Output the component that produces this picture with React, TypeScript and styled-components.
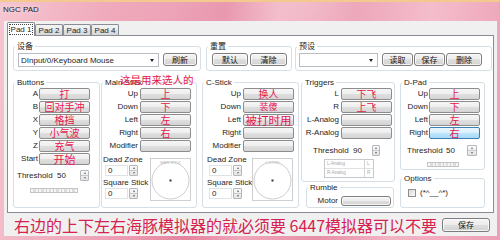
import React from "react";
import styled, { createGlobalStyle } from "styled-components";

const CJK = `"Noto Sans CJK SC", "Liberation Sans", sans-serif`;

const GlobalStyle = createGlobalStyle`
  html, body { margin: 0; padding: 0; background: #eea6b8; }
  body {
    width: 500px; height: 240px; overflow: hidden;
    font-family: "Liberation Sans", "Noto Sans CJK SC", sans-serif;
  }
  *, *::before, *::after { box-sizing: border-box; }
`;

const Window = styled.div`
  width: 500px;
  height: 240px;
  display: flex;
  flex-direction: column;
  padding: 0 2px 4px 4px;
  border-top: 2px solid #f3c98f;
  border-right: 1px solid #eab27a;
  background:
    radial-gradient(ellipse at 62% 0%, rgba(255, 255, 255, 0.3), transparent 45%),
    linear-gradient(100deg, #f6c6d1 0%, #f0adbe 18%, #ec9bb1 32%, #e4839e 42%, #f0a8ba 52%, #e88ea7 66%, #f3b5c5 80%, #eda0b5 100%);
`;

const TitleBar = styled.div`
  height: 19px;
  flex: none;
  margin-left: -1px;
  padding-top: 3px;
  font-size: 8px;
  line-height: 9px;
  color: #222;
  text-shadow: 0 0 4px rgba(255, 255, 255, 0.9);
`;

const Client = styled.div`
  flex: 1;
  min-height: 0;
  display: flex;
  flex-direction: column;
  padding: 1px 3px 0 3px;
  background: #f0f0f0;
`;

const TabStrip = styled.div`
  height: 13px;
  flex: none;
  display: flex;
  align-items: flex-end;
`;

const Tab = styled.div<{ $active?: boolean }>`
  width: 28px;
  height: ${(p) => (p.$active ? 14 : 11)}px;
  margin-bottom: ${(p) => (p.$active ? -1 : 0)}px;
  position: relative;
  z-index: ${(p) => (p.$active ? 2 : 1)};
  border: 1px solid #898c95;
  border-bottom: none;
  border-radius: 2px 2px 0 0;
  background: ${(p) =>
    p.$active ? "#ffffff" : "linear-gradient(#f3f3f3 0%, #ebebeb 50%, #e0e0e0 50%, #d8d8d8 100%)"};
  display: flex;
  align-items: ${(p) => (p.$active ? "flex-start" : "center")};
  justify-content: center;
  padding-top: ${(p) => (p.$active ? 2 : 0)}px;
  font-size: 8px;
  line-height: 9px;
  color: #1e1e1e;
`;

const TabFocus = styled.span`
  outline: 1px dotted #444;
  outline-offset: 0;
  padding: 0 1px;
`;

const Panel = styled.div`
  height: 178px;
  flex: none;
  position: relative;
  z-index: 1;
  border: 1px solid #898c95;
  background: #fff;
  padding: 6px 4px 0 5px;
  display: flex;
  flex-direction: column;
`;

const Row = styled.div<{ $mt?: number }>`
  display: flex;
  align-items: flex-start;
  flex: none;
  margin-top: ${(p) => p.$mt ?? 0}px;
`;

const Stack = styled.div<{ $ml?: number }>`
  display: flex;
  flex-direction: column;
  flex: none;
  margin-left: ${(p) => p.$ml ?? 0}px;
`;

const Group = styled.fieldset<{ $w: number; $h: number; $ml?: number; $mt?: number }>`
  margin: ${(p) => p.$mt ?? 0}px 0 0 ${(p) => p.$ml ?? 0}px;
  padding: 0;
  min-width: 0;
  width: ${(p) => p.$w}px;
  height: ${(p) => p.$h}px;
  flex: none;
  border: 1px solid #d5dfe5;
  border-radius: 3px;
`;

const Legend = styled.legend`
  margin-left: 1px;
  padding: 0 2px;
  font-size: 8px;
  line-height: 9px;
  height: 9px;
  color: #1e1e1e;
  white-space: nowrap;
`;

const Body = styled.div<{ $pad: string; $row?: boolean; $gap?: number }>`
  position: relative;
  padding: ${(p) => p.$pad};
  display: flex;
  flex-direction: ${(p) => (p.$row ? "row" : "column")};
  align-items: flex-start;
  gap: ${(p) => p.$gap ?? 0}px;
`;

const Combo = styled.div<{ $w: number }>`
  width: ${(p) => p.$w}px;
  height: 14px;
  flex: none;
  border: 1px solid #b9bdc3;
  background: #fff;
  display: flex;
  align-items: center;
  padding-left: 2px;
  font-size: 8px;
  color: #1e1e1e;
`;

const ComboText = styled.span`
  flex: 1;
  white-space: nowrap;
  overflow: hidden;
`;

const ComboArrow = styled.span`
  width: 0;
  height: 0;
  margin-right: 4px;
  border-left: 2.5px solid transparent;
  border-right: 2.5px solid transparent;
  border-top: 3px solid #222;
`;

const PushButton = styled.div<{ $w: number; $h?: number; $ml?: number }>`
  width: ${(p) => p.$w}px;
  height: ${(p) => p.$h ?? 13}px;
  margin-left: ${(p) => p.$ml ?? 0}px;
  flex: none;
  border: 1px solid #7d7d7d;
  border-radius: 3px;
  background: linear-gradient(#f4f4f4 0%, #ececec 50%, #dedede 50%, #d2d2d2 100%);
  box-shadow: inset 0 0 0 1px rgba(255, 255, 255, 0.75);
  display: flex;
  align-items: center;
  justify-content: center;
  font-family: ${CJK};
  font-size: 8px;
  color: #111;
`;

const MapGrid = styled.div<{ $lw: number; $gap: number }>`
  display: grid;
  grid-template-columns: ${(p) => p.$lw}px 51px;
  column-gap: ${(p) => p.$gap}px;
  row-gap: 1px;
  grid-auto-rows: 12px;
  align-items: center;
`;

const MapLabel = styled.span`
  text-align: right;
  font-size: 8px;
  line-height: 12px;
  color: #1e1e1e;
  white-space: nowrap;
`;

const MapButton = styled.div<{ $hot?: boolean; $size?: number }>`
  height: 12px;
  border: 1px solid ${(p) => (p.$hot ? "#3c7fb1" : "#8d8d8d")};
  border-radius: 2px;
  background: ${(p) =>
    p.$hot
      ? "linear-gradient(#eaf6fd 0%, #d9f0fc 50%, #bee6fd 50%, #a7d9f5 100%)"
      : "linear-gradient(#f6f6f6 0%, #eeeeee 50%, #e0e0e0 50%, #d4d4d4 100%)"};
  display: flex;
  align-items: center;
  justify-content: center;
  font-family: ${CJK};
  font-size: ${(p) => p.$size ?? 10}px;
  line-height: 10px;
  color: #e5164c;
  white-space: nowrap;
`;

const Scribble = styled.span`
  position: absolute;
  left: 18px;
  top: -13px;
  font-family: ${CJK};
  font-size: 10.5px;
  line-height: 12px;
  color: #e5164c;
  white-space: nowrap;
  pointer-events: none;
`;

const FieldRow = styled.div<{ $pl: number; $mt: number }>`
  display: flex;
  align-items: center;
  height: 11px;
  margin-top: ${(p) => p.$mt}px;
  padding-left: ${(p) => p.$pl}px;
`;

const FieldLabel = styled.span<{ $w?: number }>`
  ${(p) => (p.$w ? `width: ${p.$w}px;` : "")}
  flex: none;
  font-size: 8px;
  line-height: 10px;
  color: #1e1e1e;
  white-space: nowrap;
`;

const ValueBox = styled.div<{ $w: number; $plain?: boolean }>`
  width: ${(p) => p.$w}px;
  height: 11px;
  flex: none;
  padding-left: 2px;
  font-size: 8px;
  line-height: 9px;
  color: #1e1e1e;
  border: 1px solid ${(p) => (p.$plain ? "transparent" : "#dfe3e8")};
  background: #fff;
`;

const Spinner = styled.div<{ $w?: number; $ml?: number }>`
  width: ${(p) => p.$w ?? 9}px;
  height: 11px;
  margin-left: ${(p) => p.$ml ?? 2}px;
  flex: none;
  display: flex;
  flex-direction: column;
  border: 1px solid #b4b8bd;
  border-radius: 1px;
  background: linear-gradient(#fafafa, #e4e4e4);
`;

const SpinHalf = styled.span<{ $down?: boolean }>`
  flex: 1;
  display: flex;
  align-items: center;
  justify-content: center;
  border-top: ${(p) => (p.$down ? "1px solid #c6c9cc" : "none")};
  &::after {
    content: "";
    width: 0;
    height: 0;
    border-left: 1.5px solid transparent;
    border-right: 1.5px solid transparent;
    ${(p) => (p.$down ? "border-top: 2px solid #6a6a6a;" : "border-bottom: 2px solid #6a6a6a;")}
  }
`;

const SegBar = styled.div<{ $w: number; $ml: number; $mt: number }>`
  display: flex;
  width: ${(p) => p.$w}px;
  height: 5px;
  margin: ${(p) => p.$mt}px 0 0 ${(p) => p.$ml}px;
  border: 1px solid #c4c4c4;
  background: #f6f6f6;
`;

const Seg = styled.span`
  flex: 1;
  border-right: 1px solid #cdcdcd;
  background: linear-gradient(90deg, transparent 30%, #dcdcdc 30%, #dcdcdc 70%, transparent 70%);
  &:last-child {
    border-right: none;
  }
`;

const StickArea = styled.div<{ $pl: number }>`
  display: flex;
  margin-top: 3px;
  padding-left: ${(p) => p.$pl}px;
`;

const StickCol = styled.div<{ $w: number }>`
  width: ${(p) => p.$w}px;
  flex: none;
  display: flex;
  flex-direction: column;
`;

const InputRow = styled.div<{ $mb?: number }>`
  display: flex;
  align-items: center;
  height: 11px;
  padding-left: 2px;
  margin-bottom: ${(p) => p.$mb ?? 0}px;
`;

const StickBox = styled.div`
  width: 41px;
  height: 43px;
  margin-top: 3px;
  flex: none;
  border: 1px solid #cfcfcf;
  background: #fff;
  display: flex;
`;

const MiniList = styled.div`
  width: 50px;
  height: 19px;
  margin: 3px 0 0 22px;
  border: 1px solid #c8c8c8;
  display: grid;
  grid-template-columns: 1fr 9px;
  grid-template-rows: 1fr 1fr;
`;

const MiniCell = styled.span<{ $side?: boolean; $top?: boolean }>`
  font-size: 4.5px;
  line-height: 8px;
  color: #a8a8a8;
  padding-left: 2px;
  white-space: nowrap;
  overflow: hidden;
  border-left: ${(p) => (p.$side ? "1px solid #d4d4d4" : "none")};
  border-bottom: ${(p) => (p.$top ? "1px solid #e0e0e0" : "none")};
`;

const MotorRow = styled.div`
  display: grid;
  grid-template-columns: 31px 50px;
  column-gap: 3px;
  padding-top: 3px;
  align-items: center;
`;

const CheckRow = styled.div`
  display: flex;
  align-items: center;
  gap: 4px;
  padding: 5px 0 0 7px;
  font-size: 8px;
  line-height: 10px;
  color: #1e1e1e;
`;

const CheckBox = styled.span`
  width: 8px;
  height: 8px;
  flex: none;
  border: 1px solid #8f8f8f;
  background: linear-gradient(135deg, #d8d8d8, #fbfbfb);
`;

const Footer = styled.div`
  flex: 1;
  display: flex;
  align-items: center;
  justify-content: space-between;
  padding: 0 4px 0 7px;
`;

const Note = styled.span`
  font-family: ${CJK};
  font-size: 16px;
  line-height: 18px;
  color: #d6224f;
  white-space: nowrap;
`;

type MapRow = { label: string; note?: string; size?: number; hot?: boolean };

const buttonsRows: MapRow[] = [
  { label: "A", note: "打" },
  { label: "B", note: "回对手冲" },
  { label: "X", note: "格挡" },
  { label: "Y", note: "小气波" },
  { label: "Z", note: "充气" },
  { label: "Start", note: "开始", size: 11 },
];

const mainRows: MapRow[] = [
  { label: "Up", note: "上" },
  { label: "Down", note: "下" },
  { label: "Left", note: "左" },
  { label: "Right", note: "右" },
  { label: "Modifier" },
];

const cRows: MapRow[] = [
  { label: "Up", note: "换人" },
  { label: "Down", note: "装傻", size: 9 },
  { label: "Left", note: "被打时用", size: 11.5 },
  { label: "Right" },
  { label: "Modifier" },
];

const trigRows: MapRow[] = [
  { label: "L", note: "下飞" },
  { label: "R", note: "上飞" },
  { label: "L-Analog" },
  { label: "R-Analog" },
];

const dpadRows: MapRow[] = [
  { label: "Up", note: "上" },
  { label: "Down", note: "下" },
  { label: "Left", note: "左" },
  { label: "Right", note: "右", hot: true },
];

function MapRows({ rows, lw, gap }: { rows: MapRow[]; lw: number; gap: number }) {
  return (
    <MapGrid $lw={lw} $gap={gap}>
      {rows.map((r) => (
        <React.Fragment key={r.label}>
          <MapLabel>{r.label}</MapLabel>
          <MapButton $hot={r.hot} $size={r.size}>
            {r.note}
          </MapButton>
        </React.Fragment>
      ))}
    </MapGrid>
  );
}

function Spin({ w, ml }: { w?: number; ml?: number }) {
  return (
    <Spinner $w={w} $ml={ml}>
      <SpinHalf />
      <SpinHalf $down />
    </Spinner>
  );
}

function Bar({ w, ml, mt, n }: { w: number; ml: number; mt: number; n: number }) {
  return (
    <SegBar $w={w} $ml={ml} $mt={mt}>
      {Array.from({ length: n }).map((_, i) => (
        <Seg key={i} />
      ))}
    </SegBar>
  );
}

function StickPreview({ name }: { name: string }) {
  return (
    <StickBox>
      <svg width="39" height="41" viewBox="0 0 39 41">
        <circle cx="19.5" cy="21.5" r="18.5" fill="none" stroke="#cdcdcd" strokeWidth="1" />
        <text x="19.5" y="5" fontSize="3.6" fill="#b8b8b8" textAnchor="middle" fontFamily="Liberation Sans">
          {name}
        </text>
        <rect x="18.5" y="20.5" width="2" height="2" fill="#333" />
      </svg>
    </StickBox>
  );
}

function StickSection({ pl, colW, name }: { pl: number; colW: number; name: string }) {
  return (
    <StickArea $pl={pl}>
      <StickCol $w={colW}>
        <FieldLabel>Dead Zone</FieldLabel>
        <InputRow>
          <ValueBox $w={23}>0</ValueBox>
          <Spin ml={1} />
        </InputRow>
        <FieldLabel style={{ marginTop: 2 }}>Square Stick</FieldLabel>
        <InputRow>
          <ValueBox $w={23}>0</ValueBox>
          <Spin ml={1} />
        </InputRow>
      </StickCol>
      <StickPreview name={name} />
    </StickArea>
  );
}

export default function App() {
  return (
    <>
      <GlobalStyle />
      <Window>
        <TitleBar>NGC PAD</TitleBar>
        <Client>
          <TabStrip>
            <Tab $active>
              <TabFocus>Pad 1</TabFocus>
            </Tab>
            <Tab>Pad 2</Tab>
            <Tab>Pad 3</Tab>
            <Tab>Pad 4</Tab>
          </TabStrip>
          <Panel>
            <Row>
              <Group $w={188} $h={29}>
                <Legend>设备</Legend>
                <Body $pad="2px 0 0 4px" $row $gap={4}>
                  <Combo $w={141}>
                    <ComboText>DInput/0/Keyboard Mouse</ComboText>
                    <ComboArrow />
                  </Combo>
                  <PushButton $w={34}>刷新</PushButton>
                </Body>
              </Group>
              <Group $w={86} $h={29} $ml={5}>
                <Legend>重置</Legend>
                <Body $pad="2px 0 0 5px" $row $gap={2}>
                  <PushButton $w={36}>默认</PushButton>
                  <PushButton $w={37}>清除</PushButton>
                </Body>
              </Group>
              <Group $w={197} $h={29} $ml={3}>
                <Legend>预设</Legend>
                <Body $pad="2px 0 0 3px" $row $gap={1}>
                  <Combo $w={79}>
                    <ComboText />
                    <ComboArrow />
                  </Combo>
                  <PushButton $w={31} $ml={3}>读取</PushButton>
                  <PushButton $w={31}>保存</PushButton>
                  <PushButton $w={36}>删除</PushButton>
                </Body>
              </Group>
            </Row>

            <Row $mt={7}>
              <Group $w={87} $h={130}>
                <Legend>Buttons</Legend>
                <Body $pad="1px 0 0 0">
                  <MapRows rows={buttonsRows} lw={24} gap={1} />
                  <FieldRow $pl={3} $mt={5}>
                    <FieldLabel $w={37}>Threshold</FieldLabel>
                    <ValueBox $w={24} $plain>
                      50
                    </ValueBox>
                    <Spin ml={2} />
                  </FieldRow>
                  <Bar w={48} ml={16} mt={7} n={6} />
                </Body>
              </Group>

              <Group $w={96} $h={130} $ml={1}>
                <Legend>Main Stick</Legend>
                <Body $pad="1px 0 0 0">
                  <Scribble>这是用来选人的</Scribble>
                  <MapRows rows={mainRows} lw={36} gap={2} />
                  <StickSection pl={1} colW={47} name="MAIN STICK" />
                </Body>
              </Group>

              <Group $w={97} $h={130} $ml={5}>
                <Legend>C-Stick</Legend>
                <Body $pad="1px 0 0 0">
                  <MapRows rows={cRows} lw={38} gap={2} />
                  <StickSection pl={4} colW={45} name="C-STICK" />
                </Body>
              </Group>

              <Stack $ml={2}>
                <Group $w={94} $h={104}>
                  <Legend>Triggers</Legend>
                  <Body $pad="1px 0 0 0">
                    <MapRows rows={trigRows} lw={37} gap={2} />
                    <FieldRow $pl={11} $mt={6}>
                      <FieldLabel $w={37}>Threshold</FieldLabel>
                      <ValueBox $w={20} $plain>
                        90
                      </ValueBox>
                      <Spin w={8} ml={2} />
                    </FieldRow>
                    <MiniList>
                      <MiniCell $top>L-Analog</MiniCell>
                      <MiniCell $side $top>L</MiniCell>
                      <MiniCell>R-Analog</MiniCell>
                      <MiniCell $side>R</MiniCell>
                    </MiniList>
                  </Body>
                </Group>
                <Group $w={88} $h={25} $ml={5} $mt={1}>
                  <Legend>Rumble</Legend>
                  <Body $pad="0 0 0 0">
                    <MotorRow>
                      <MapLabel>Motor</MapLabel>
                      <PushButton $w={50} $h={10} />
                    </MotorRow>
                  </Body>
                </Group>
              </Stack>

              <Stack $ml={5}>
                <Group $w={85} $h={92}>
                  <Legend>D-Pad</Legend>
                  <Body $pad="1px 0 0 0">
                    <MapRows rows={dpadRows} lw={27} gap={1} />
                    <FieldRow $pl={6} $mt={6}>
                      <FieldLabel $w={36}>Threshold</FieldLabel>
                      <ValueBox $w={22} $plain>
                        50
                      </ValueBox>
                      <Spin w={10} ml={2} />
                    </FieldRow>
                    <Bar w={32} ml={26} mt={6} n={4} />
                  </Body>
                </Group>
                <Group $w={85} $h={34} $mt={4}>
                  <Legend>Options</Legend>
                  <Body $pad="0 0 0 0">
                    <CheckRow>
                      <CheckBox />
                      <span>(*^__^*)</span>
                    </CheckRow>
                  </Body>
                </Group>
              </Stack>
            </Row>
          </Panel>
          <Footer>
            <Note>右边的上下左右海豚模拟器的就必须要 6447模拟器可以不要</Note>
            <PushButton $w={48} $h={14}>保存</PushButton>
          </Footer>
        </Client>
      </Window>
    </>
  );
}
